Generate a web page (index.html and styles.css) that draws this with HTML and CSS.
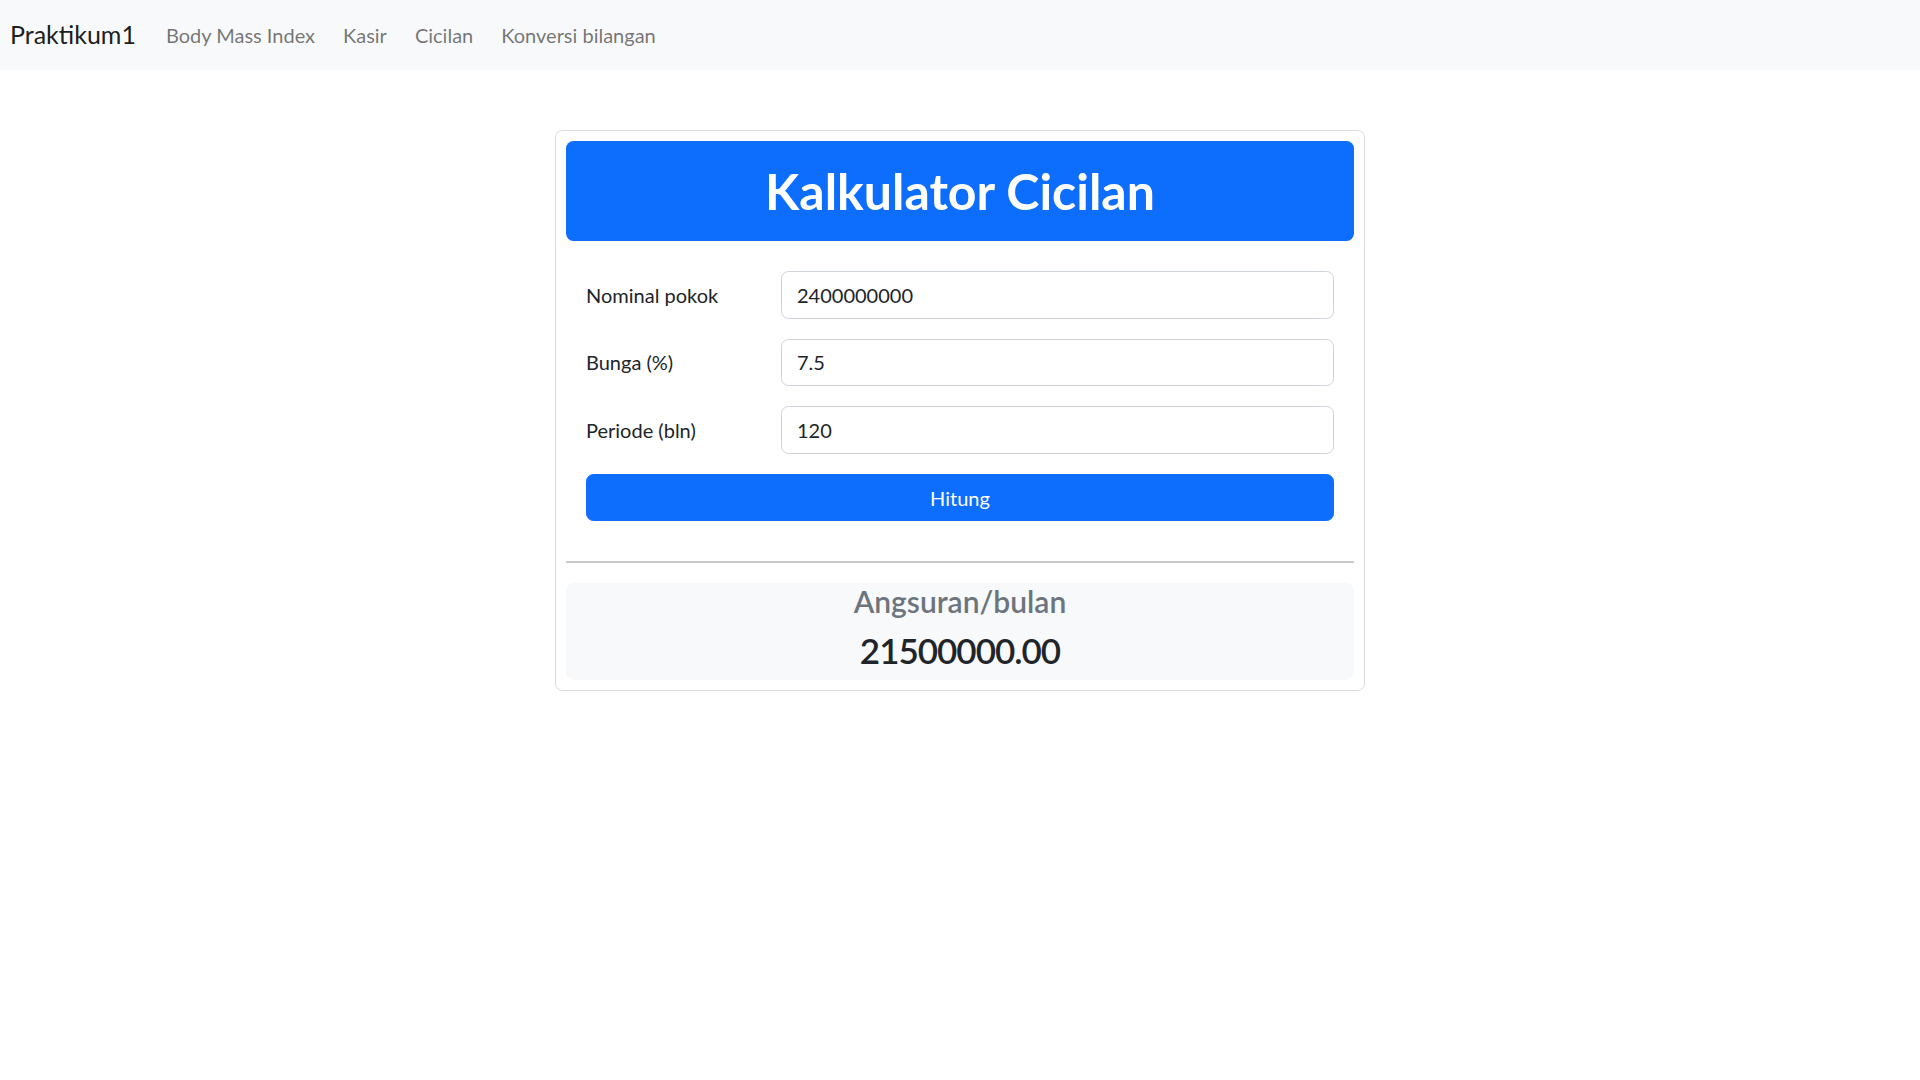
FILE: index.html
```html
<!DOCTYPE html>
<html lang="id">
<head>
<meta charset="utf-8">
<title>Kalkulator Cicilan</title>
<link rel="stylesheet" href="styles.css">
</head>
<body>
<nav class="navbar">
  <a class="brand" href="#">Praktikum1</a>
  <ul class="nav-links">
    <li><a href="#">Body Mass Index</a></li>
    <li><a href="#">Kasir</a></li>
    <li><a href="#">Cicilan</a></li>
    <li><a href="#">Konversi bilangan</a></li>
  </ul>
</nav>
<main class="page">
  <div class="card">
    <div class="card-header"><h1>Kalkulator Cicilan</h1></div>
    <form class="card-body">
      <div class="form-row">
        <label class="form-label">Nominal pokok</label>
        <input class="form-input" type="text" value="2400000000">
      </div>
      <div class="form-row">
        <label class="form-label">Bunga (%)</label>
        <input class="form-input" type="text" value="7.5">
      </div>
      <div class="form-row">
        <label class="form-label">Periode (bln)</label>
        <input class="form-input" type="text" value="120">
      </div>
      <button class="btn-primary" type="button">Hitung</button>
    </form>
    <hr class="divider">
    <div class="result">
      <h4 class="result-title">Angsuran/bulan</h4>
      <h2 class="result-value">21500000.00</h2>
    </div>
  </div>
</main>
</body>
</html>
```
FILE: styles.css
```css
* { box-sizing: border-box; }
html, body { margin: 0; padding: 0; }
body {
  font-family: Lato, "Noto Sans", "Liberation Sans", sans-serif;
  font-size: 20px;
  line-height: 1.5;
  color: #212529;
  background: #fff;
}
.navbar {
  height: 70px;
  background: #f8f9fa;
  display: flex;
  align-items: center;
  padding: 0 10px;
}
.brand {
  font-size: 25px;
  color: rgba(0,0,0,.9);
  text-decoration: none;
  margin-right: 16px;
}
.nav-links {
  list-style: none;
  margin: 0;
  padding: 0;
  display: flex;
}
.nav-links a {
  display: block;
  padding: 0 14px;
  color: rgba(0,0,0,.55);
  text-decoration: none;
  font-size: 20px;
}
.page { padding-top: 60px; }
.card {
  width: 810px;
  margin: 0 auto;
  border: 1px solid rgba(0,0,0,.15);
  border-radius: 7.5px;
  padding: 10px;
}
.card-header {
  background: #0d6efd;
  color: #fff;
  border-radius: 7.5px;
  padding: 20px;
  text-align: center;
  margin-bottom: 10px;
}
.card-header h1 {
  margin: 0;
  font-size: 50px;
  line-height: 60px;
  font-weight: 700;
}
.card-body { padding: 20px; }
.form-row {
  display: grid;
  grid-template-columns: 165px 1fr;
  column-gap: 30px;
  align-items: center;
  margin-bottom: 20px;
}
.form-label { font-size: 20px; font-weight: 400; }
.form-input {
  height: 47.5px;
  width: 100%;
  border: 1px solid #ced4da;
  border-radius: 7.5px;
  padding: 0 15px;
  font-family: inherit;
  font-size: 20px;
  color: #212529;
}
.btn-primary {
  display: block;
  width: 100%;
  height: 47.5px;
  background: #0d6efd;
  border: 1px solid #0d6efd;
  border-radius: 7.5px;
  color: #fff;
  font-family: inherit;
  font-size: 20px;
  padding-top: 2px;
}
.divider {
  border: 0;
  border-top: 2px solid #c8c9ca;
  margin: 20px 0;
}
.result {
  background: #f8f9fa;
  border-radius: 7.5px;
  text-align: center;
  padding-bottom: 8px;
}
.result-title {
  margin: 0;
  font-size: 30px;
  line-height: 36px;
  font-weight: 600;
  color: #6c757d;
}
.result-value {
  margin: 10px 0 0;
  font-size: 35px;
  line-height: 43px;
  letter-spacing: -1px;
  font-weight: 600;
  color: #212529;
}
```
